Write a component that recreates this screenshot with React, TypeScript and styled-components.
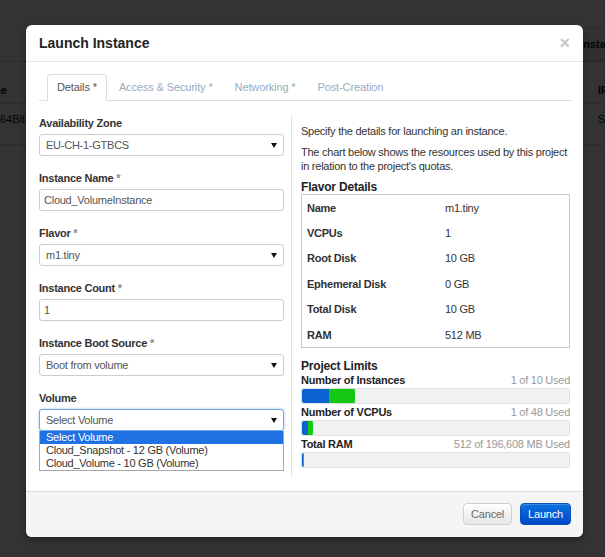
import * as React from "react";
import styled, { createGlobalStyle } from "styled-components";

type Field = {
  label: string;
  value: string;
  required?: boolean;
  kind: "select" | "input";
  focused?: boolean;
  options?: string[];
};

const fields: Field[] = [
  { label: "Availability Zone", value: "EU-CH-1-GTBCS", kind: "select" },
  { label: "Instance Name", value: "Cloud_VolumeInstance", kind: "input", required: true },
  { label: "Flavor", value: "m1.tiny", kind: "select", required: true },
  { label: "Instance Count", value: "1", kind: "input", required: true },
  { label: "Instance Boot Source", value: "Boot from volume", kind: "select", required: true },
  {
    label: "Volume",
    value: "Select Volume",
    kind: "select",
    focused: true,
    options: ["Select Volume", "Cloud_Snapshot - 12 GB (Volume)", "Cloud_Volume - 10 GB (Volume)"],
  },
];

const flavor = [
  ["Name", "m1.tiny"],
  ["VCPUs", "1"],
  ["Root Disk", "10 GB"],
  ["Ephemeral Disk", "0 GB"],
  ["Total Disk", "10 GB"],
  ["RAM", "512 MB"],
];

const quotas = [
  { label: "Number of Instances", used: 1, added: 1, total: 10, text: "1 of 10 Used" },
  { label: "Number of VCPUs", used: 1, added: 1, total: 48, text: "1 of 48 Used" },
  { label: "Total RAM", used: 512, added: 512, total: 196608, text: "512 of 196,608 MB Used" },
];

const tabs = ["Details *", "Access & Security *", "Networking *", "Post-Creation"];

const App = () => {
  return (
    <Screen>
      <GlobalStyle />
      <Page>
        <Toolbar>
          <PageButton>Launch Instance</PageButton>
        </Toolbar>
        <PageRow $top={21}>
          <PageCell $bold $shift={-23}>Name</PageCell>
          <PageCell $bold>IP Address</PageCell>
        </PageRow>
        <PageRow $top={8}>
          <PageCell>64Bit-Server</PageCell>
          <PageCell>Shutoff</PageCell>
        </PageRow>
      </Page>
      <Backdrop />

      <Modal>
        <Header>
          <Title>Launch Instance</Title>
          <Close>×</Close>
        </Header>

        <Body>
          <Tabs>
            {tabs.map((t, i) => (
              <Tab key={t} $active={i === 0}>
                {t}
              </Tab>
            ))}
          </Tabs>

          <Columns>
            <FormColumn>
              {fields.map((f) => (
                <Group key={f.label}>
                  <Label>
                    {f.label}
                    {f.required && <Required> *</Required>}
                  </Label>
                  <Control $input={f.kind === "input"} $focused={f.focused}>
                    <span>{f.value}</span>
                    {f.kind === "select" && <Caret />}
                  </Control>
                  {f.options && (
                    <OptionList>
                      {f.options.map((o, i) => (
                        <Option key={o} $selected={i === 0}>
                          {o}
                        </Option>
                      ))}
                    </OptionList>
                  )}
                </Group>
              ))}
            </FormColumn>

            <InfoColumn>
              <Text>Specify the details for launching an instance.</Text>
              <Text>
                The chart below shows the resources used by this project in relation to the
                project's quotas.
              </Text>
              <Heading>Flavor Details</Heading>
              <FlavorBox>
                {flavor.map(([k, v]) => (
                  <FlavorRow key={k}>
                    <FlavorKey>{k}</FlavorKey>
                    <span>{v}</span>
                  </FlavorRow>
                ))}
              </FlavorBox>

              <Heading $spaced>Project Limits</Heading>
              {quotas.map((q) => (
                <div key={q.label}>
                  <QuotaHead>
                    <QuotaName>{q.label}</QuotaName>
                    <QuotaUsed>{q.text}</QuotaUsed>
                  </QuotaHead>
                  <Bar>
                    <Fill
                      $color="#0b62d2"
                      style={{ width: `${(q.used / q.total) * 100}%` }}
                    />
                    <Fill
                      $color="#13c913"
                      $end
                      style={{ width: `${(q.added / q.total) * 100}%` }}
                    />
                  </Bar>
                </div>
              ))}
            </InfoColumn>
          </Columns>
        </Body>

        <Footer>
          <Button>Cancel</Button>
          <Button $primary>Launch</Button>
        </Footer>
      </Modal>
    </Screen>
  );
};

const GlobalStyle = createGlobalStyle`
  html, body {
    margin: 0;
    padding: 0;
  }
  body {
    font-family: "Liberation Sans", Arial, Helvetica, sans-serif;
    background: #fff;
    color: #333;
  }
  * {
    box-sizing: border-box;
  }
`;

const Screen = styled.div`
  position: relative;
  width: 605px;
  height: 557px;
  overflow: hidden;
`;

/* page behind the dialog */
const Page = styled.div`
  height: 100%;
  background: #fff;
`;

const Toolbar = styled.div`
  display: flex;
  height: 61px;
  padding: 28px 0 0 525px;
  overflow: hidden;
`;

const PageButton = styled.div`
  height: 33px;
  padding: 0 12px;
  border: 1px solid #ccc;
  background: linear-gradient(#fff, #e6e6e6);
  font-size: 11px;
  font-weight: bold;
  line-height: 31px;
  white-space: nowrap;
  color: #111;
`;

const PageRow = styled.div<{ $top: number }>`
  display: flex;
  height: 42px;
  padding-top: ${(p) => p.$top}px;
  border-top: 1px solid #ddd;
  font-size: 11px;
  line-height: 15px;
  color: #111;
  &:last-child {
    border-bottom: 1px solid #ddd;
  }
`;

const PageCell = styled.div<{ $bold?: boolean; $shift?: number }>`
  flex: 0 0 ${(p) => 598 - (p.$shift ?? 0)}px;
  margin-left: ${(p) => p.$shift ?? 0}px;
  font-weight: ${(p) => (p.$bold ? "bold" : "normal")};
  white-space: nowrap;
  &:last-child {
    flex: 1;
    margin-left: 0;
  }
`;

const Backdrop = styled.div`
  position: absolute;
  inset: 0;
  background: rgba(0, 0, 0, 0.8);
`;

/* dialog */
const Modal = styled.div`
  position: absolute;
  top: 25px;
  left: 26px;
  width: 557px;
  height: 512px;
  display: flex;
  flex-direction: column;
  background: #fff;
  border-radius: 6px;
  box-shadow: 0 3px 7px rgba(0, 0, 0, 0.3);
`;

const Header = styled.div`
  display: flex;
  align-items: center;
  justify-content: space-between;
  height: 37px;
  padding: 0 13px;
  border-bottom: 1px solid #e5e5e5;
`;

const Title = styled.h3`
  margin: 0;
  font-size: 14px;
  font-weight: bold;
  line-height: 18px;
  color: #222;
`;

const Close = styled.span`
  font-size: 18px;
  font-weight: bold;
  line-height: 18px;
  color: #c8c8c8;
`;

const Body = styled.div`
  flex: 1;
  padding: 12px 12px 0 13px;
  font-size: 11px;
  letter-spacing: -0.25px;
`;

const Tabs = styled.div`
  display: flex;
  padding-left: 8px;
  border-bottom: 1px solid #ddd;
`;

const Tab = styled.div<{ $active?: boolean }>`
  margin: 0 2px -1px 0;
  padding: 0 9px;
  line-height: 25px;
  letter-spacing: -0.12px;
  border: 1px solid ${(p) => (p.$active ? "#ddd" : "transparent")};
  border-bottom-color: transparent;
  border-radius: 4px 4px 0 0;
  background: ${(p) => (p.$active ? "#fff" : "transparent")};
  color: ${(p) => (p.$active ? "#555" : "#97abbf")};
`;

const Columns = styled.div`
  display: flex;
  margin-top: 14px;
`;

const FormColumn = styled.div`
  width: 245px;
  margin-right: 7px;
`;

const Group = styled.div`
  position: relative;
  margin-bottom: 14px;
`;

const Label = styled.label`
  display: block;
  margin-bottom: 3px;
  font-weight: bold;
  line-height: 16px;
  color: #333;
`;

const Required = styled.span`
  color: #8a8a8a;
`;

const Control = styled.div<{ $input?: boolean; $focused?: boolean }>`
  display: flex;
  align-items: center;
  justify-content: space-between;
  height: 22px;
  padding: 0 6px 0 ${(p) => (p.$input ? 4 : 6)}px;
  border: 1px solid ${(p) => (p.$focused ? "#6fa6e4" : "#ccc")};
  border-radius: 3px;
  background: #fff;
  color: #555;
  box-shadow: ${(p) => (p.$focused ? "0 0 3px rgba(82, 150, 236, 0.5)" : "none")};
`;

const Caret = styled.i`
  width: 0;
  height: 0;
  border-left: 3px solid transparent;
  border-right: 3px solid transparent;
  border-top: 5px solid #111;
`;

const OptionList = styled.div`
  position: absolute;
  top: 100%;
  left: 0;
  right: 0;
  border: 1px solid #a7a7a7;
  border-top: none;
  background: #fff;
`;

const Option = styled.div<{ $selected?: boolean }>`
  padding: 0 6px;
  line-height: 13px;
  background: ${(p) => (p.$selected ? "#1f72e3" : "#fff")};
  color: ${(p) => (p.$selected ? "#fff" : "#333")};
`;

const InfoColumn = styled.div`
  flex: 1;
  padding: 9px 1px 9px 9px;
  border-left: 1px solid #e3e3e3;
`;

const Text = styled.p`
  margin: 0 0 7px;
  line-height: 14px;
  color: #333;
`;

const Heading = styled.h4<{ $spaced?: boolean }>`
  margin: ${(p) => (p.$spaced ? "12px 0 0" : "7px 0 0")};
  font-size: 12px;
  font-weight: bold;
  line-height: ${(p) => (p.$spaced ? 12 : 14)}px;
  letter-spacing: -0.2px;
  color: #222;
`;

const FlavorBox = styled.div`
  border: 1px solid #c8c8c8;
  padding-left: 5px;
`;

const FlavorRow = styled.div`
  display: flex;
  align-items: center;
  height: 25.4px;
  color: #333;
`;

const FlavorKey = styled.span`
  width: 138px;
  font-weight: bold;
`;

const QuotaHead = styled.div`
  display: flex;
  justify-content: space-between;
  padding-top: 1px;
  line-height: 15px;
`;

const QuotaName = styled.span`
  font-weight: bold;
  color: #222;
`;

const QuotaUsed = styled.span`
  color: #9a9a9a;
`;

const Bar = styled.div`
  display: flex;
  height: 16px;
  border: 1px solid #dedede;
  border-radius: 3px;
  background: #f1f1f1;
  overflow: hidden;
`;

const Fill = styled.div<{ $color: string; $end?: boolean }>`
  min-width: ${(p) => (p.$end ? 0 : 1)}px;
  margin: -1px 0;
  background: ${(p) => p.$color};
  border-radius: ${(p) => (p.$end ? "0 3px 3px 0" : "0")};
`;

const Footer = styled.div`
  display: flex;
  justify-content: flex-end;
  gap: 8px;
  height: 46px;
  padding: 11px 12px 0;
  border-top: 1px solid #ddd;
  border-radius: 0 0 6px 6px;
  background: #f5f5f5;
`;

const Button = styled.button<{ $primary?: boolean }>`
  height: 22px;
  padding: 0 7px;
  border: 1px solid ${(p) => (p.$primary ? "#0b4fb8" : "#cfcfcf")};
  border-radius: 4px;
  background: ${(p) =>
    p.$primary ? "linear-gradient(#0b72df, #0049c9)" : "linear-gradient(#fff, #e6e6e6)"};
  color: ${(p) => (p.$primary ? "#fff" : "#6a6a6a")};
  font-family: inherit;
  font-size: 11px;
  letter-spacing: -0.2px;
  box-shadow: inset 0 1px 0 rgba(255, 255, 255, 0.2);
`;

export default App;
